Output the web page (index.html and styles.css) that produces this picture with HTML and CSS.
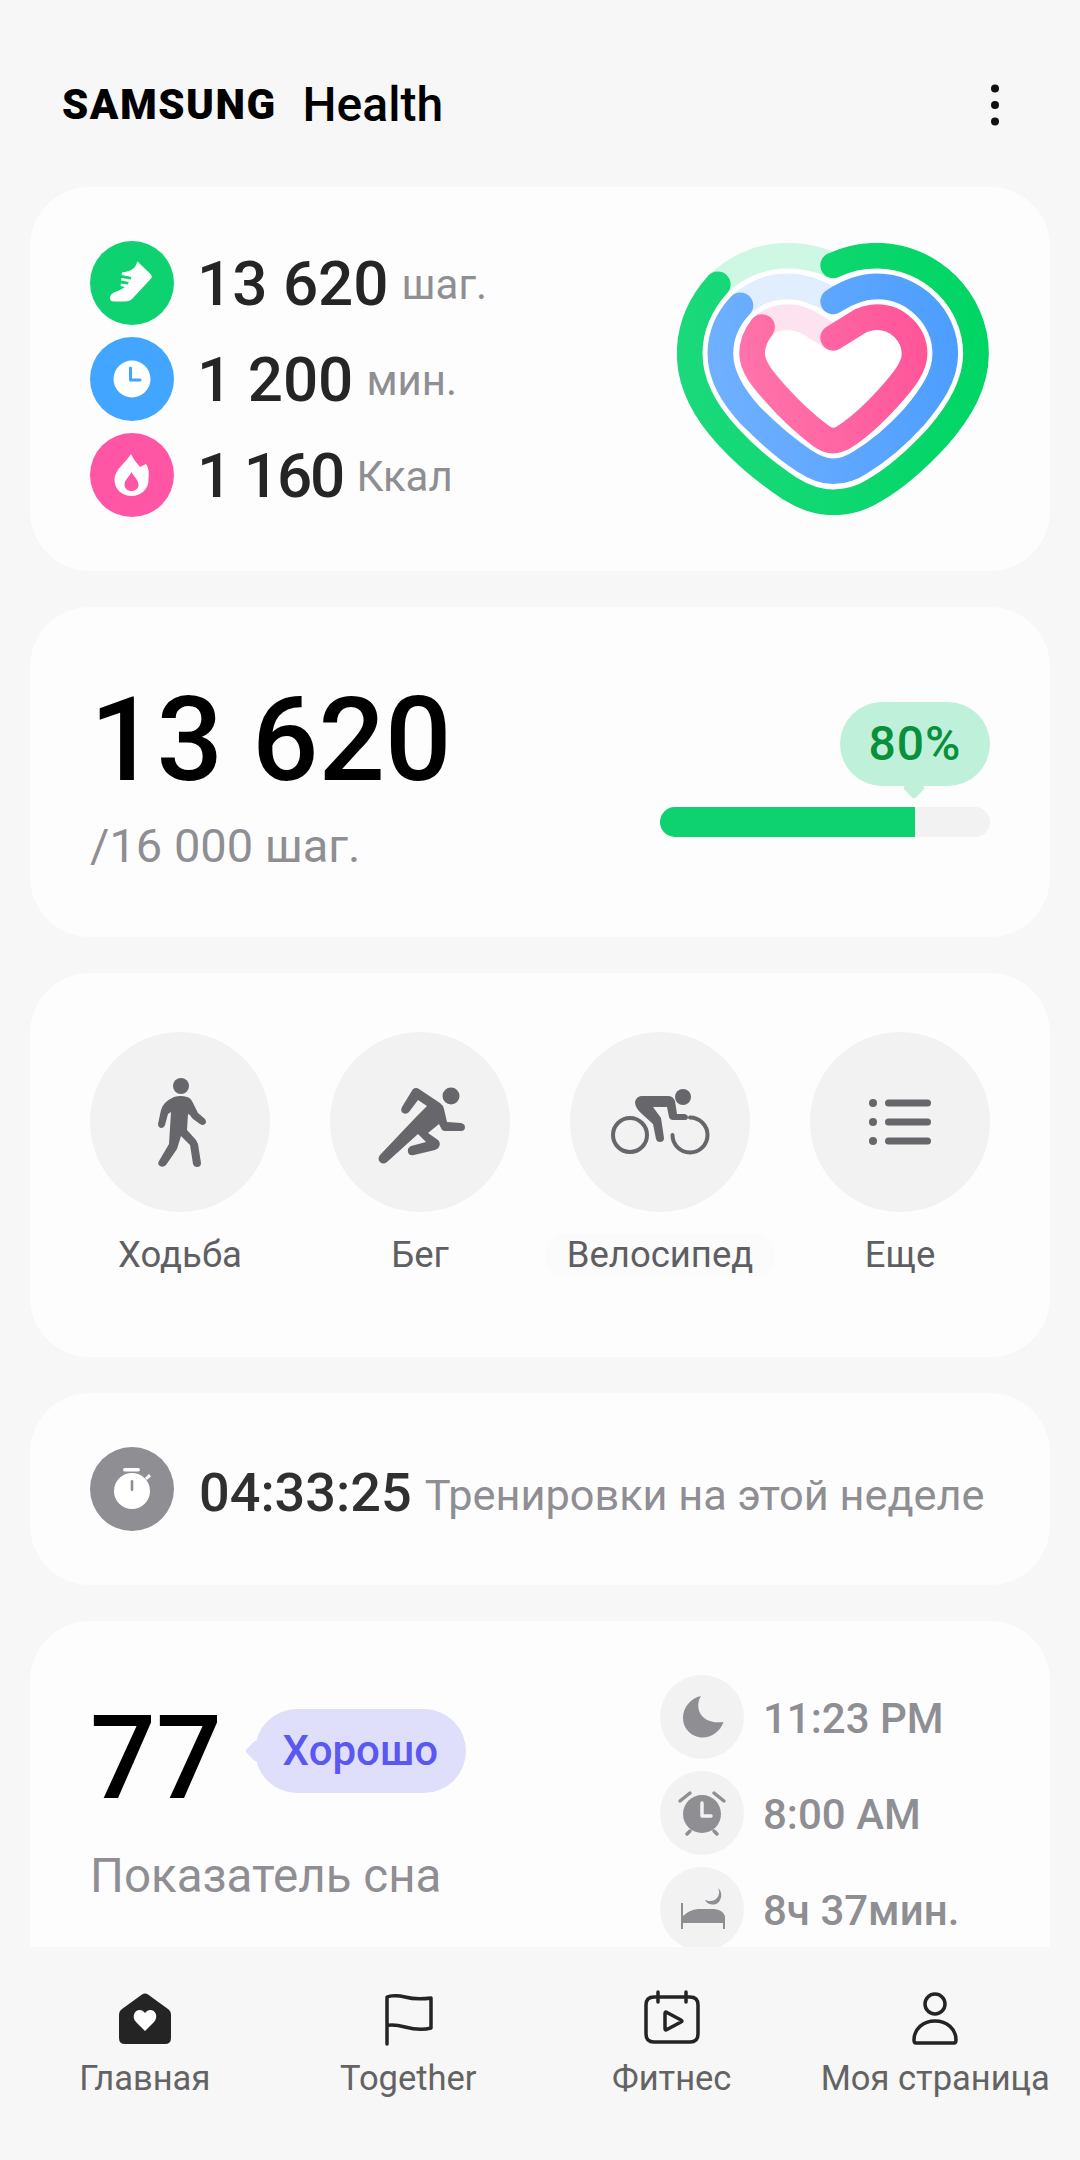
FILE: index.html
```html
<!DOCTYPE html>
<html lang="ru">
<head>
    <meta charset="UTF-8">
    <meta name="viewport" content="width=device-width, initial-scale=1.0">
    <title>Samsung Health</title>
    <link rel="stylesheet" href="styles.css">
</head>
<body>

<div class="app">
    <main class="scroll">
        <header class="top-bar">
            <div class="logo"><span class="logo-brand">SAMSUNG</span><span class="logo-health">Health</span></div>
            <svg class="kebab" viewBox="0 0 10 42"><circle cx="5" cy="4.500" r="4"/><circle cx="5" cy="21" r="4"/><circle cx="5" cy="37.500" r="4"/></svg>
        </header>

        <!-- Дневная активность -->
        <section class="card activity">
            <div class="stats">
                <div class="stat">
                    <span class="dot dot-green">
                        <svg viewBox="0 0 84 84"><path class="white" d="M47.500 20.500 L61 33.500 Q62.500 35.500 61 37.500 L42.500 57.500 Q40 60.500 35 60.500 L24 60.500 Q19.500 60.500 20 56.500 Q20.500 53 24 51.500 Q30 49.500 35 46 L30.500 45 L31 42.500 L37.500 43.500 L39 41 L31 39.500 L31.500 37 L40.500 38.500 L41.500 36 L31.500 34 L32 31.500 Q41 30.500 45 26 Z"/></svg>
                    </span>
                    <span class="stat-num">13 620</span><span class="stat-unit">шаг.</span>
                </div>
                <div class="stat">
                    <span class="dot dot-blue">
                        <svg viewBox="0 0 84 84"><circle class="white" cx="42" cy="42" r="18.500"/><path class="clock-hand" d="M40.500 31 V43 H50"/></svg>
                    </span>
                    <span class="stat-num">1 200</span><span class="stat-unit">мин.</span>
                </div>
                <div class="stat">
                    <span class="dot dot-pink">
                        <svg viewBox="0 0 84 84"><path class="white" d="M41 21 C43 26 47 30 50 34 L56 31 C60 37 58.500 44 58.500 47 C58.500 56 51 63 41.500 63 C32 63 24.500 56 24.500 47 C24.500 36 35 31 41 21 Z"/><path class="flame-in" d="M41.500 39 C44 44 48.500 47 48.500 51.500 C48.500 55.500 45.500 58 41.500 58 C37.500 58 34.500 55.500 34.500 51.500 C34.500 47 39 44 41.500 39 Z"/></svg>
                    </span>
                    <span class="stat-num stat-num-tight">1 160</span><span class="stat-unit">Ккал</span>
                </div>
            </div>

            <svg class="heart" viewBox="110 68 935 815">
                <path class="heart-bg" d="M578 135 C620 115 660 106 710 106 C870 106 1006 240 1006 400 C1006 490 960 570 890 650 C830 715 770 770 700 810 C660 835 620 845 578 845 C536 845 490 830 450 805 C390 765 320 710 265 650 C195 575 148 490 148 400 C148 320 180 250 232 192 C285 140 360 106 440 106 C490 106 540 118 578 135 Z"/>
                <g class="ring">
                    <path stroke="#cef8e4" d="M232 192 C285 140 360 106 440 106 C490 106 540 118 578 135"/>
                    <path stroke="url(#gradGreen)" d="M578 135 C620 115 660 106 710 106 C870 106 1006 240 1006 400 C1006 490 960 570 890 650 C830 715 770 770 700 810 C660 835 620 845 578 845 C536 845 490 830 450 805 C390 765 320 710 265 650 C195 575 148 490 148 400 C148 320 180 250 232 192"/>
                    <path stroke="#e0eefe" d="M300 255 C335 222 385 198 440 198 C490 198 535 215 578 243"/>
                    <path stroke="url(#gradBlue)" d="M578 243 C620 215 660 198 710 198 C820 198 914 290 914 400 C914 470 870 530 820 590 C770 645 710 695 660 725 C630 745 605 752 578 752 C550 752 520 740 490 720 C430 680 375 630 330 585 C280 530 240 470 240 400 C240 345 262 295 300 255"/>
                    <path stroke="#fde2f0" d="M365 320 C385 300 415 290 440 290 C470 290 490 297 510 310 L578 352"/>
                    <path stroke="url(#gradPink)" d="M578 352 L650 307 C670 295 690 290 710 290 C770 290 822 340 822 400 C822 440 790 480 745 530 C700 580 650 625 610 650 C598 657 590 660 578 660 C565 660 555 656 540 645 C500 615 450 570 410 525 C370 480 335 440 335 400 C335 370 345 345 365 320"/>
                </g>
                <defs>
                    <linearGradient id="gradGreen" gradientUnits="userSpaceOnUse" x1="110" y1="500" x2="1045" y2="400"><stop offset="0" stop-color="#1bd97c"/><stop offset="1" stop-color="#00d563"/></linearGradient>
                    <linearGradient id="gradBlue" gradientUnits="userSpaceOnUse" x1="203" y1="500" x2="952" y2="400"><stop offset="0" stop-color="#70b0ff"/><stop offset="1" stop-color="#4c9eff"/></linearGradient>
                    <linearGradient id="gradPink" gradientUnits="userSpaceOnUse" x1="297" y1="500" x2="860" y2="400"><stop offset="0" stop-color="#ff74ab"/><stop offset="1" stop-color="#ff5599"/></linearGradient>
                </defs>
            </svg>
        </section>

        <!-- Шаги -->
        <section class="card steps">
            <div class="steps-left">
                <div class="steps-num">13 620</div>
                <div class="steps-goal">/16 000 шаг.</div>
            </div>
            <div class="steps-right">
                <div class="bubble-green">80%</div>
                <div class="progress"><div class="progress-fill" style="width: 77.3%"></div></div>
            </div>
        </section>

        <!-- Тренировки -->
        <section class="card workouts">
            <div class="workout">
                <span class="workout-icon">
                    <svg viewBox="0 0 180 180"><g class="grey-fill"><circle cx="91" cy="54" r="8"/><path d="M84 65 Q91 63 97 65 Q101 66 103 71 L108 81 L115 87 Q117 90 115 92 Q113 94 110 92 L103 87 Q101 85 100 83 L98 82 L97 98 L106 108 Q107 110 108 112 L111 131 Q111 135 107 135 Q104 135 103 132 L100 113 L91 104 L87 117 L76 133 Q73 136 70 134 Q67 132 69 129 L79 112 L81 80 L78 82 L75 93 Q74 96 71 96 Q68 95 68 92 L71 78 Q73 70 84 65 Z"/></g></svg>
                </span>
                <span class="workout-label">Ходьба</span>
            </div>
            <div class="workout">
                <span class="workout-icon">
                    <svg viewBox="0 0 180 180"><g class="grey-fill"><circle cx="121" cy="64" r="8.500"/><path d="M83 57 Q86 55 89 57 L110 71 Q113 73 114 77 L117 90 L131 91 Q135 92 135 95 Q135 99 131 99 L115 99 Q112 99 111 96 L109 92 L98 101 L108 108 Q111 111 109 115 Q108 117 105 118 L84 123 Q79 124 78 120 Q77 116 81 114 L96 110 L88 102 L57 130 Q53 133 50 130 Q47 127 50 123 L87 84 L97 74 L88 68 L79 80 Q76 83 73 81 Q70 79 72 75 Z"/></g></svg>
                </span>
                <span class="workout-label">Бег</span>
            </div>
            <div class="workout">
                <span class="workout-icon">
                    <svg viewBox="0 0 180 180"><g class="grey-fill"><circle cx="113" cy="65" r="8"/><path d="M71 64 L98 64 Q103 64 105 69 L107 82 L115 82 Q118 83 118 85 Q118 88 115 88 L103 88 Q100 88 99 85 L97 75 L83 75 L91 86 L94 106 Q94 110 90 110 Q87 110 86 107 L83 92 L72 82 Q65 76 65 70 Q66 65 71 64 Z"/></g><g class="grey-line"><circle cx="60" cy="103" r="17"/><path d="M120 85.500 A17.500 17.500 0 1 1 102.500 103"/></g></svg>
                </span>
                <span class="workout-label label-pale">Велосипед</span>
            </div>
            <div class="workout">
                <span class="workout-icon">
                    <svg viewBox="0 0 180 180"><g class="grey-fill"><circle cx="63" cy="71" r="4"/><circle cx="63" cy="90" r="4"/><circle cx="63" cy="109" r="4"/><rect x="75" y="67.500" width="46" height="7" rx="3.500"/><rect x="75" y="86.500" width="46" height="7" rx="3.500"/><rect x="75" y="105.500" width="46" height="7" rx="3.500"/></g></svg>
                </span>
                <span class="workout-label">Еще</span>
            </div>
        </section>

        <!-- Время за неделю -->
        <section class="card week">
            <span class="dot dot-grey">
                <svg viewBox="0 0 84 84"><g class="white"><circle cx="42" cy="44" r="18"/><rect x="33" y="21" width="17" height="3.500" rx="1.700"/><path d="M55 31 L59 27 L61 29.500 L57 33 Z"/></g><rect class="stopwatch-hand" x="40.700" y="33" width="2.600" height="11" rx="1.300"/></svg>
            </span>
            <span class="week-time">04:33:25</span>
            <span class="week-text">Тренировки на этой неделе</span>
        </section>

        <!-- Сон -->
        <section class="card sleep">
            <div class="sleep-left">
                <div class="sleep-top">
                    <span class="sleep-score">77</span>
                    <span class="bubble-violet">Хорошо</span>
                </div>
                <div class="sleep-title">Показатель сна</div>
            </div>
            <div class="sleep-rows">
                <div class="sleep-row">
                    <span class="dot dot-soft">
                        <svg viewBox="0 0 84 84"><path class="grey-mid" d="M41 21 C34 32 40 50 63.500 47 C60 57 51 62.500 43 62.500 C31 62.500 23 53 23 43 C23 32 31 23 41 21 Z"/></svg>
                    </span>
                    <span class="sleep-val">11:23 PM</span>
                </div>
                <div class="sleep-row">
                    <span class="dot dot-soft">
                        <svg viewBox="0 0 84 84"><circle class="grey-mid" cx="42" cy="43" r="19"/><path class="alarm-hand" d="M42 32 V45 H51"/><path class="alarm-line" d="M20 30 L30 22 M54 22 L64 30 M30 60 L27 63 M54 60 L57 63"/></svg>
                    </span>
                    <span class="sleep-val">8:00 AM</span>
                </div>
                <div class="sleep-row">
                    <span class="dot dot-soft">
                        <svg viewBox="0 0 84 84"><path class="grey-mid" d="M58 21 C61 26 58 34 50 34 C48 34 46.500 33.500 45 33 C47 37 52 38.500 56 37 C61.500 35 63.500 25 58 21 Z"/><path class="grey-mid" d="M21 36 H23 V49 Q29 43 38 42 L54 42 Q63 43 65 49 V62 H63 V56 H23 V62 H21 Z"/></svg>
                    </span>
                    <span class="sleep-val">8ч 37мин.</span>
                </div>
            </div>
        </section>
    </main>

    <nav class="tab-bar">
        <div class="tab">
            <svg viewBox="0 0 56 56"><path class="tab-solid" d="M25 4.500 Q28 2.500 31 4.500 L51 19 Q54 21 54 25 L54 48 Q54 54 48 54 L8 54 Q2 54 2 48 L2 25 Q2 21 5 19 Z"/><path class="white" d="M28 41 L19 32 C13 25 20 17 26 21 L28 23 L30 21 C36 17 43 25 37 32 Z"/></svg>
            <span>Главная</span>
        </div>
        <div class="tab">
            <svg viewBox="0 0 56 56"><path class="tab-line" d="M7 54 V7 C7 7 14 4 25 7 C36 10 44 9 51 8 V38 C44 40 36 40 25 37 C14 34 7 35 7 36"/></svg>
            <span>Together</span>
        </div>
        <div class="tab">
            <svg viewBox="0 0 56 56"><path class="tab-line" d="M10 7 H46 Q54 7 54 15 V44 Q54 52 46 52 H10 Q2 52 2 44 V15 Q2 7 10 7 Z M14 2 V12 M42 2 V12"/><path class="tab-line" d="M22 22 L37 30 Q39 31 37 32 L22 40 Q21 40 21 38 V24 Q21 22 22 22 Z"/></svg>
            <span>Фитнес</span>
        </div>
        <div class="tab">
            <svg viewBox="0 0 56 56"><circle class="tab-line" cx="28" cy="14" r="10"/><path class="tab-line" d="M9 53 Q7 53 7 50 C7 39 16 31 28 31 C40 31 49 39 49 50 Q49 53 47 53 Z"/></svg>
            <span>Моя страница</span>
        </div>
    </nav>
</div>

</body>
</html>
```

FILE: styles.css
```css
* {
    box-sizing: border-box;
}

body {
    margin: 0;
    background: #f7f7f7;
    font-family: 'Roboto', sans-serif;
}

.app {
    display: flex;
    flex-direction: column;
    height: 2160px;
    overflow: hidden;
}

.scroll {
    height: 1947px;
    padding: 0 30px;
    overflow: hidden;
    flex-shrink: 0;
}

/* Шапка */
.top-bar {
    height: 187px;
    padding: 22px 50px 0 32px;
    display: flex;
    align-items: center;
    justify-content: space-between;
}

.logo {
    display: flex;
    align-items: center;
    gap: 26px;
    color: #000;
}

.logo-brand {
    font-size: 42px;
    font-weight: 900;
    letter-spacing: 1.5px;
}

.logo-health {
    font-size: 48px;
    font-weight: 500;
}

.kebab {
    width: 10px;
    height: 42px;
    fill: #111;
}

/* Карточки */
.card {
    background: #fdfdfe;
    border-radius: 60px;
    margin-bottom: 36px;
}

.dot {
    width: 84px;
    height: 84px;
    border-radius: 50%;
    flex-shrink: 0;
    display: block;
}

.dot svg {
    display: block;
    width: 84px;
    height: 84px;
}

.dot-green { background: #0ed16f; }
.dot-blue { background: #42a5ff; }
.dot-pink { background: #ff55a5; }
.dot-grey { background: #8e8e93; }
.dot-soft { background: #f2f2f3; }

.white { fill: #fff; }

.clock-hand {
    fill: none;
    stroke: #42a5ff;
    stroke-width: 3;
    stroke-linecap: round;
    stroke-linejoin: round;
}

.flame-in { fill: #ff55a5; }
.stopwatch-hand { fill: #8e8e93; }

.activity {
    height: 384px;
    padding: 0 61px 0 60px;
    display: flex;
    align-items: center;
    justify-content: space-between;
}

.stats {
    display: flex;
    flex-direction: column;
    gap: 12px;
}

.stat {
    display: flex;
    align-items: center;
    height: 84px;
}

.stat-num {
    margin-left: 23px;
    font-size: 62px;
    font-weight: 500;
    color: #252525;
}

.stat-num-tight {
    letter-spacing: -2px;
}

.stat-unit {
    margin: 3px 0 0 13px;
    font-size: 42px;
    color: #8e8e93;
}

.heart {
    width: 312px;
    height: 272px;
}

.heart-bg { fill: #fff; }

.ring path {
    fill: none;
    stroke-width: 77;
    stroke-linecap: round;
}

/* Шаги */
.steps {
    height: 330px;
    padding: 0 60px 0 60px;
    display: flex;
    justify-content: space-between;
}

.steps-left {
    padding-top: 65px;
}

.steps-num {
    font-size: 117px;
    font-weight: 500;
    line-height: 136px;
    color: #000;
}

.steps-goal {
    margin-top: 11px;
    font-size: 47px;
    line-height: 54px;
    color: #8e8e93;
}

.steps-right {
    width: 330px;
    padding-top: 95px;
    display: flex;
    flex-direction: column;
    align-items: flex-end;
}

.bubble-green {
    position: relative;
    width: 150px;
    height: 84px;
    border-radius: 42px;
    background: #bff1da;
    color: #0a8f3c;
    font-size: 48px;
    font-weight: 500;
    letter-spacing: 1px;
    line-height: 84px;
    text-align: center;
}

.bubble-green::after {
    content: "";
    position: absolute;
    left: 66px;
    top: 78px;
    width: 16px;
    height: 16px;
    border-radius: 3px;
    background: #bff1da;
    transform: rotate(45deg);
}

.progress {
    width: 330px;
    height: 30px;
    margin-top: 21px;
    border-radius: 15px;
    background: #f2f2f3;
    overflow: hidden;
}

.progress-fill {
    height: 100%;
    background: #0ed16f;
}

/* Тренировки */
.workouts {
    height: 384px;
    padding: 59px 60px 0;
    display: flex;
    justify-content: space-between;
}

.workout {
    width: 180px;
    display: flex;
    flex-direction: column;
    align-items: center;
}

.workout-icon {
    width: 180px;
    height: 180px;
    border-radius: 50%;
    background: #f2f2f3;
}

.workout-icon svg {
    display: block;
    width: 180px;
    height: 180px;
}

.grey-fill { fill: #66666b; }

.grey-line {
    fill: none;
    stroke: #66666b;
    stroke-width: 4;
    stroke-linecap: round;
}

.workout-label {
    margin-top: 22px;
    padding: 0 21px;
    border-radius: 18px;
    white-space: nowrap;
    font-size: 36.500px;
    line-height: 42px;
    color: #5f5f63;
}

.label-pale {
    background: #fbfbfc;
}

/* Неделя */
.week {
    height: 192px;
    padding: 0 0 0 60px;
    display: flex;
    align-items: center;
}

.week-time {
    margin: 6px 0 0 25px;
    font-size: 54px;
    font-weight: 500;
    color: #303030;
}

.week-text {
    margin: 12px 0 0 13px;
    font-size: 43.300px;
    color: #8e8e93;
    white-space: nowrap;
}

/* Сон */
.sleep {
    height: 420px;
    padding: 54px 60px 0;
    margin-bottom: 0;
    display: flex;
    justify-content: space-between;
}

.sleep-top {
    display: flex;
    align-items: center;
    margin-top: 31px;
}

.sleep-score {
    font-size: 116px;
    font-weight: 500;
    line-height: 104px;
    color: #000;
}

.bubble-violet {
    position: relative;
    margin: 0 0 14px 33px;
    width: 211px;
    height: 84px;
    border-radius: 42px;
    background: #dfdffc;
    color: #5a58f0;
    font-size: 42px;
    font-weight: 500;
    line-height: 84px;
    text-align: center;
}

.bubble-violet::after {
    content: "";
    position: absolute;
    left: -7px;
    top: 34px;
    width: 16px;
    height: 16px;
    border-radius: 3px;
    background: #dfdffc;
    transform: rotate(45deg);
}

.sleep-title {
    margin-top: 39px;
    font-size: 47.500px;
    line-height: 54px;
    color: #8e8e93;
}

.sleep-rows {
    width: 330px;
    display: flex;
    flex-direction: column;
    gap: 12px;
}

.sleep-row {
    display: flex;
    align-items: center;
}

.sleep-val {
    margin: 3px 0 0 19px;
    font-size: 42px;
    font-weight: 500;
    color: #8e8e93;
    white-space: nowrap;
}

.grey-mid { fill: #8e8e93; }

.alarm-hand {
    fill: none;
    stroke: #f2f2f3;
    stroke-width: 3.500;
    stroke-linecap: round;
    stroke-linejoin: round;
}

.alarm-line {
    fill: none;
    stroke: #8e8e93;
    stroke-width: 3.500;
    stroke-linecap: round;
}

/* Нижнее меню */
.tab-bar {
    flex: 1;
    padding: 43px 0 0 13px;
    display: grid;
    grid-template-columns: repeat(4, 263.500px);
    align-items: start;
    background: #f7f7f7;
}

.tab {
    display: flex;
    flex-direction: column;
    align-items: center;
    font-size: 34.500px;
    line-height: 40px;
    color: #636363;
    white-space: nowrap;
}

.tab svg {
    width: 56px;
    height: 56px;
    margin-bottom: 12px;
}

.tab-solid { fill: #242424; }

.tab-line {
    fill: none;
    stroke: #242424;
    stroke-width: 3.500;
    stroke-linecap: round;
    stroke-linejoin: round;
}
```
